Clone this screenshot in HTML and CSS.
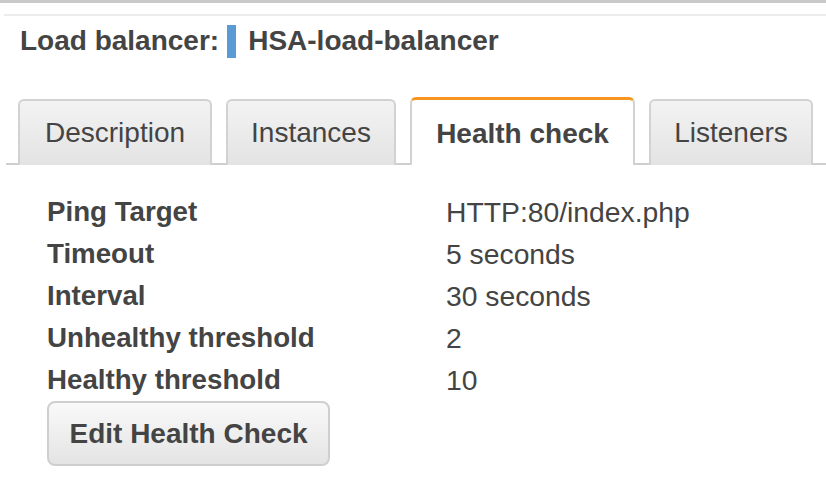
FILE: index.html
```html
<!DOCTYPE html>
<html>
<head>
<meta charset="utf-8">
<link rel="stylesheet" href="styles.css">
</head>
<body>
<div class="topline"></div>
<div class="subline"></div>
<div class="title">
  <span class="title-label">Load balancer:</span>
  <span class="title-bar"></span>
  <span class="title-name">HSA-load-balancer</span>
</div>
<div class="tabs">
  <div class="tab">Description</div>
  <div class="tab">Instances</div>
  <div class="tab active">Health check</div>
  <div class="tab">Listeners</div>
</div>
<div class="details">
  <div class="label">Ping Target</div><div class="value">HTTP:80/index.php</div>
  <div class="label">Timeout</div><div class="value">5 seconds</div>
  <div class="label">Interval</div><div class="value">30 seconds</div>
  <div class="label">Unhealthy threshold</div><div class="value">2</div>
  <div class="label">Healthy threshold</div><div class="value">10</div>
</div>
<div class="actions">
  <button class="btn">Edit Health Check</button>
</div>
</body>
</html>
```
FILE: styles.css
```css
html, body {
  margin: 0;
  padding: 0;
  background: #fff;
}
body {
  font-family: "Liberation Sans", Arial, sans-serif;
  color: #444;
  width: 826px;
  overflow: hidden;
}
.topline {
  height: 3px;
  background: #c9c9c9;
}
.subline {
  height: 2px;
  margin: 11px 0 0 4px;
  background: #ececec;
}
.title {
  display: flex;
  align-items: center;
  height: 34px;
  margin-top: 8px;
  padding-left: 20px;
  font-size: 28px;
  font-weight: bold;
  white-space: nowrap;
}
.title-bar {
  display: inline-block;
  width: 9px;
  height: 33px;
  background: #5a9bd5;
  margin: 0 12px 0 8px;
}
.tabs {
  display: flex;
  align-items: flex-end;
  gap: 14px;
  margin: 37px 0 0 6px;
  padding-left: 12px;
  border-bottom: 2px solid #cfcfcf;
  height: 68px;
}
.tab {
  box-sizing: border-box;
  height: 66px;
  margin-bottom: -2px;
  display: flex;
  align-items: center;
  justify-content: center;
  white-space: nowrap;
  font-size: 28px;
  color: #444;
  background: linear-gradient(#f3f3f3, #e3e3e3);
  border: 2px solid #d2d2d2;
  border-bottom: none;
  border-radius: 6px 6px 0 0;
}
.tab:nth-child(1) { width: 194px; }
.tab:nth-child(2) { width: 170px; }
.tab:nth-child(4) { width: 164px; }
.tab.active {
  width: 225px;
  height: 68px;
  background: #fff;
  border-top: 3px solid #f7961e;
  font-weight: bold;
  padding-top: 2px;
}
.details {
  display: grid;
  grid-template-columns: 399px auto;
  grid-auto-rows: 42px;
  align-items: center;
  margin: 26px 0 0 47px;
  font-size: 27.7px;
}
.label {
  font-weight: bold;
  white-space: nowrap;
}
.value {
  font-size: 28.3px;
  white-space: nowrap;
}
.actions {
  padding-left: 47px;
}
.btn {
  box-sizing: border-box;
  width: 283px;
  height: 65px;
  font-family: "Liberation Sans", Arial, sans-serif;
  font-size: 28px;
  font-weight: bold;
  color: #444;
  background: linear-gradient(#f9f9f9, #e4e4e4);
  border: 2px solid #cfcfcf;
  border-radius: 8px;
  padding: 0;
}
```
